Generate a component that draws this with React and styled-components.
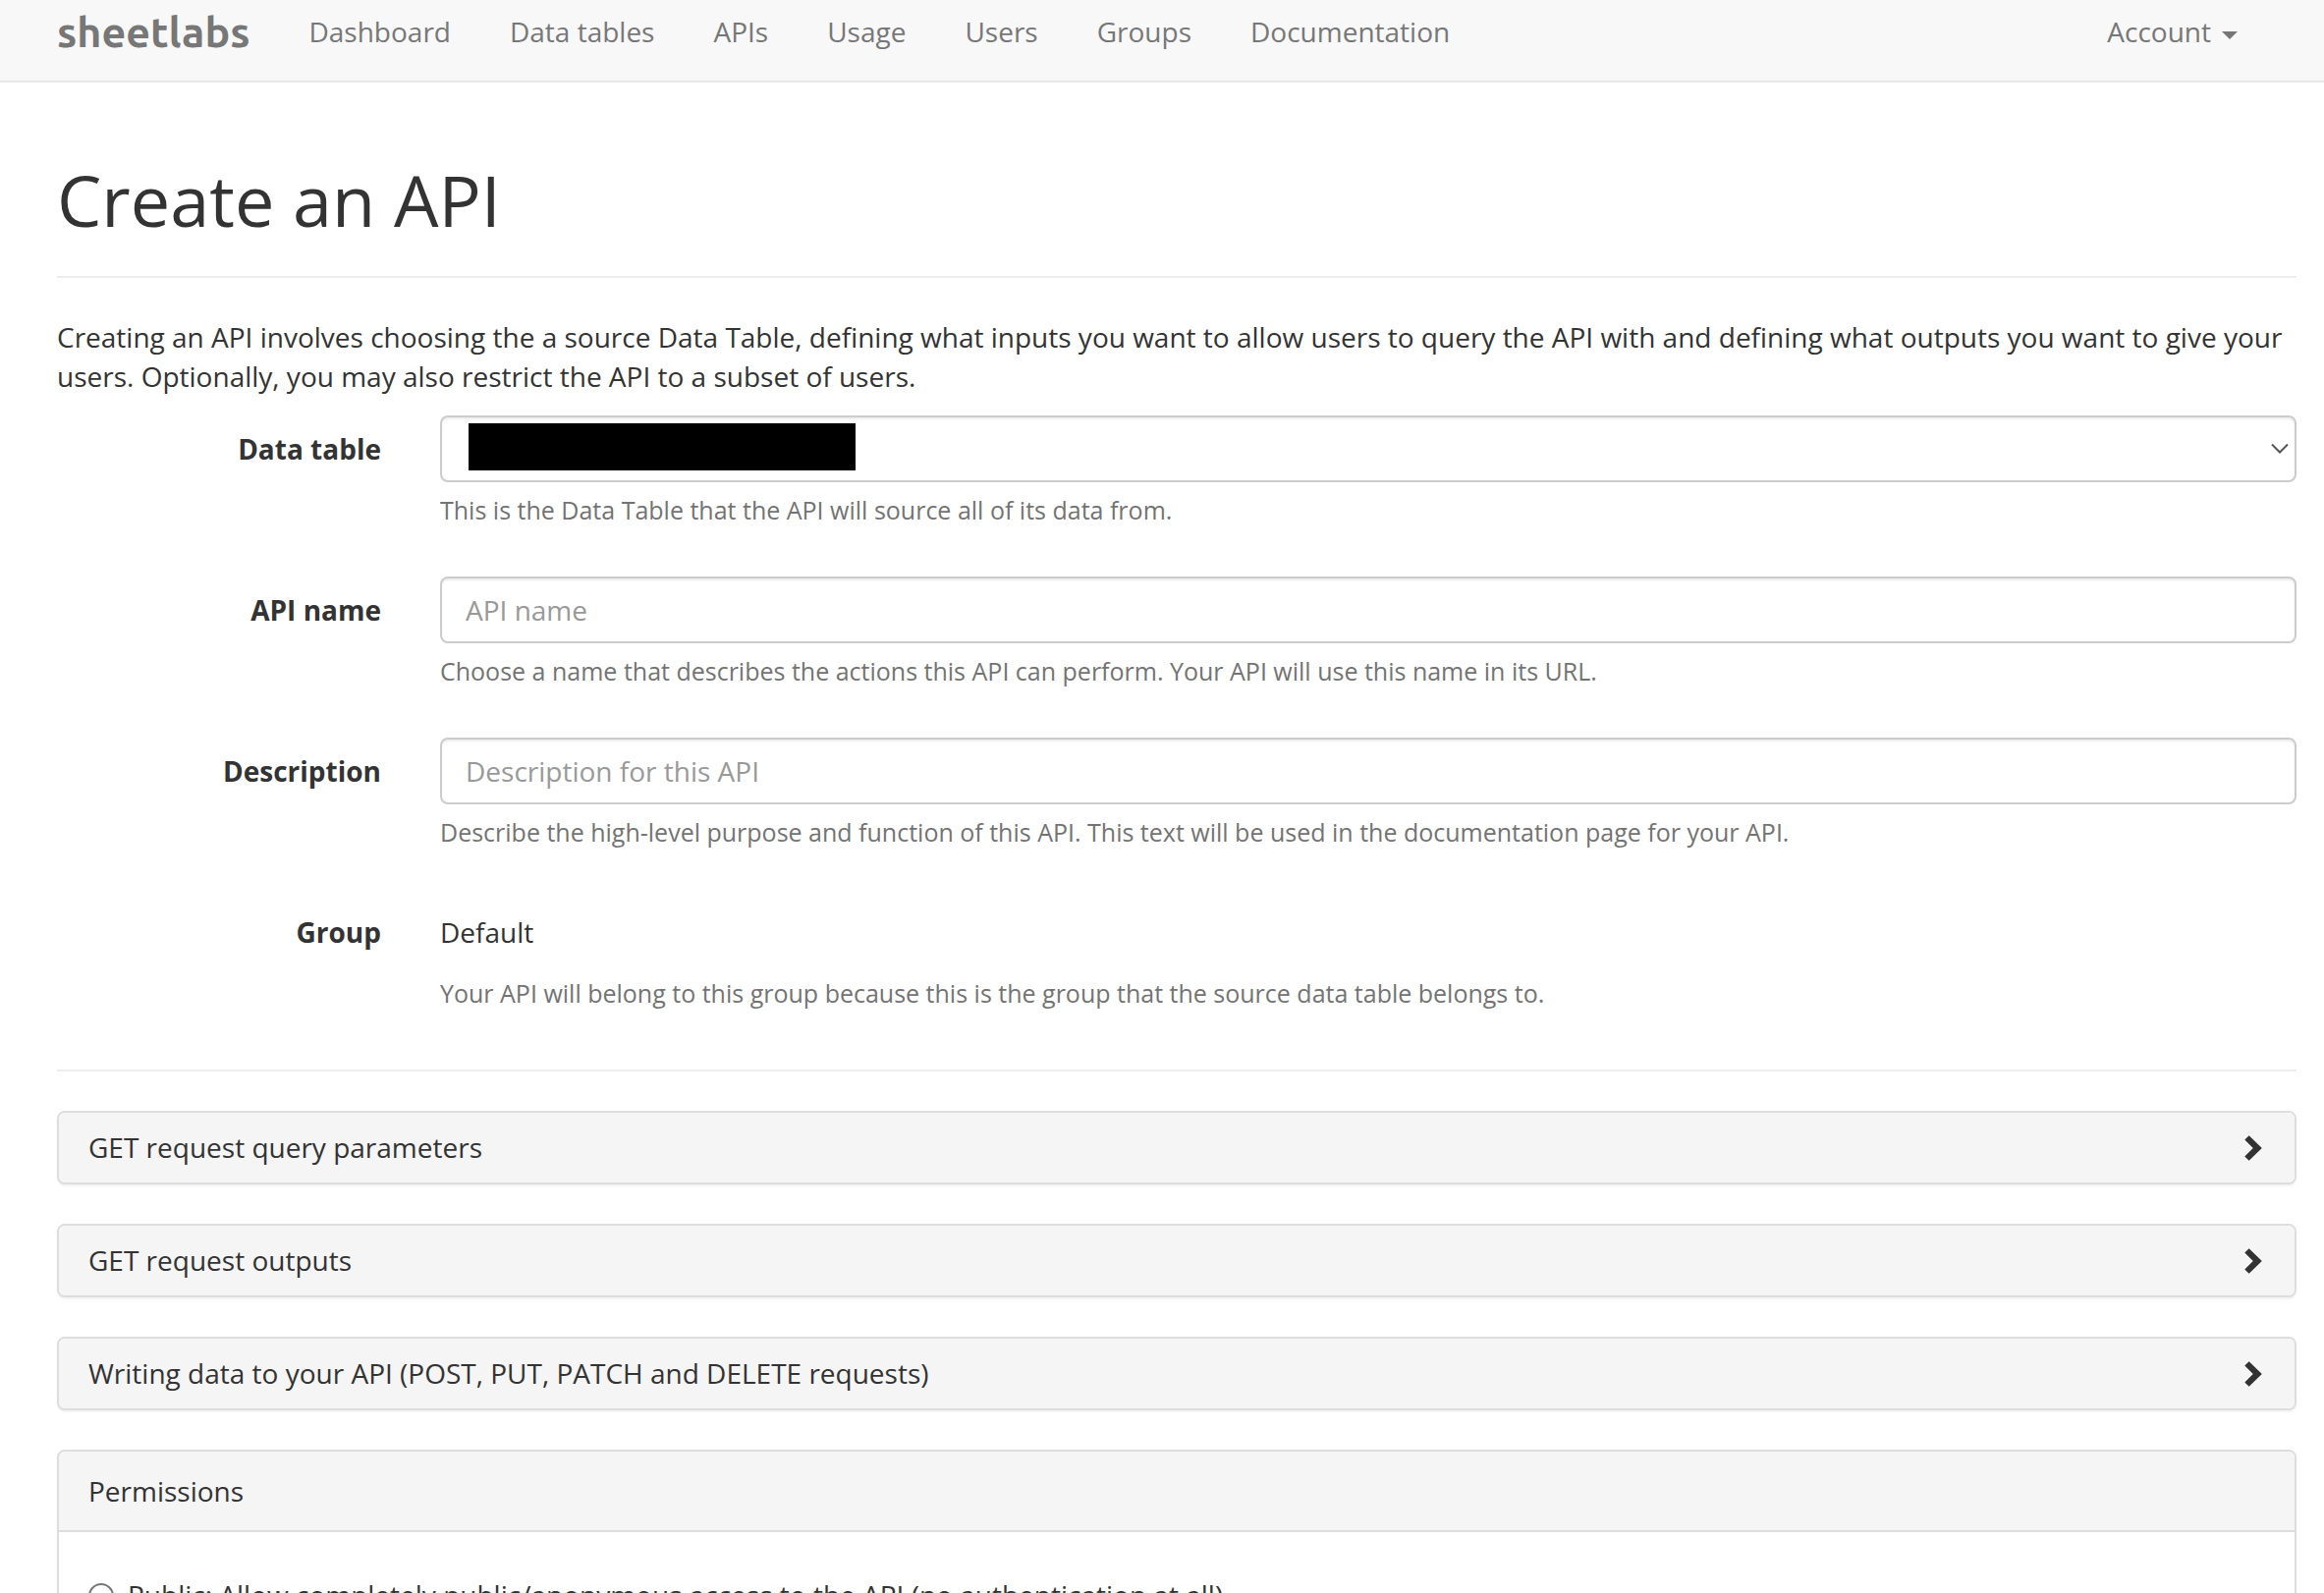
import React, { useState } from 'react';
import styled, { createGlobalStyle } from 'styled-components';

const GlobalStyle = createGlobalStyle`
  *,
  *::before,
  *::after {
    box-sizing: border-box;
  }

  body {
    margin: 0;
    background-color: #fff;
    color: #333;
    font-family: 'Open Sans', 'Noto Sans', sans-serif;
    font-size: 28px;
    line-height: 40px;
  }

  input,
  select,
  button {
    font-family: inherit;
    font-size: inherit;
    line-height: inherit;
  }
`;

const Navbar = styled.nav`
  display: flex;
  align-items: flex-start;
  gap: 60px;
  padding: 12px 88px 30px 58px;
  background-color: #f8f8f8;
  border-bottom: 2px solid #e7e7e7;
`;

const Brand = styled.a`
  color: #777;
  font-family: Ubuntu, Lato, sans-serif;
  font-size: 43px;
  font-weight: 700;
  line-height: 40px;
  text-decoration: none;
`;

const NavList = styled.ul`
  display: flex;
  flex: 1;
  gap: 60px;
  margin: 0;
  padding: 0;
  list-style: none;
`;

const NavLink = styled.a`
  color: #777;
  text-decoration: none;

  &:hover {
    color: #333;
  }
`;

const AccountButton = styled.button`
  display: flex;
  align-items: center;
  gap: 11px;
  padding: 0;
  border: 0;
  background: none;
  color: #777;
  cursor: pointer;

  &::after {
    content: '';
    margin-top: 8px;
    border-top: 8px solid;
    border-right: 8px solid transparent;
    border-left: 8px solid transparent;
  }
`;

const Page = styled.main`
  padding: 80px 28px 40px 58px;
`;

const PageTitle = styled.h1`
  margin: 0 0 40px;
  padding-bottom: 38px;
  border-bottom: 2px solid #eee;
  font-size: 72px;
  font-weight: 400;
  line-height: 79px;
`;

const Intro = styled.p`
  margin: 0 0 20px;
`;

const FormRow = styled.div`
  display: grid;
  grid-template-columns: 330px 1fr;
  column-gap: 60px;
  margin-bottom: 50px;
`;

const RowLabel = styled.label`
  padding-top: 14px;
  font-weight: 700;
  text-align: right;
`;

const fieldStyles = `
  display: block;
  width: 100%;
  height: 68px;
  padding: 12px 24px;
  border: 2px solid #ccc;
  border-radius: 8px;
  background-color: #fff;
  box-shadow: inset 0 2px 2px rgba(0, 0, 0, 0.075);
  color: #555;
`;

const TextInput = styled.input`
  ${fieldStyles}

  &::placeholder {
    color: #999;
    opacity: 1;
  }
`;

const Select = styled.select`
  ${fieldStyles}
  appearance: none;
`;

const SelectWrap = styled.div`
  position: relative;

  svg {
    position: absolute;
    top: 28px;
    right: 8px;
    pointer-events: none;
  }
`;

const Redaction = styled.span`
  position: absolute;
  top: 8px;
  left: 29px;
  width: 394px;
  height: 48px;
  background-color: #000;
  pointer-events: none;
`;

const StaticValue = styled.output`
  display: block;
  height: 68px;
  padding-top: 14px;
`;

const HelpText = styled.p`
  margin: 10px 0 0;
  color: #737373;
  font-size: 25px;
  line-height: 36px;
`;

const Divider = styled.hr`
  margin: 60px 0 40px;
  border: 0;
  border-top: 2px solid #eee;
`;

const Panels = styled.div`
  display: flex;
  flex-direction: column;
  gap: 40px;
`;

const Panel = styled.section`
  overflow: hidden;
  border: 2px solid #ddd;
  border-radius: 8px;
  background-color: #fff;
  box-shadow: 0 2px 2px rgba(0, 0, 0, 0.05);
`;

const PanelToggle = styled.button`
  display: flex;
  align-items: center;
  justify-content: space-between;
  width: 100%;
  padding: 20px 30px;
  border: 0;
  background-color: #f5f5f5;
  color: #333;
  line-height: 31px;
  text-align: left;
  cursor: pointer;
`;

const PanelHeading = styled.h2`
  margin: 0;
  padding: 20px 30px;
  border-bottom: 2px solid #ddd;
  background-color: #f5f5f5;
  font-size: 28px;
  font-weight: 400;
`;

const PanelBody = styled.div`
  padding: 44px 30px 30px;
`;

const RadioLabel = styled.label`
  display: flex;
  align-items: flex-start;
  gap: 14px;

  input {
    flex: none;
    width: 26px;
    height: 26px;
    margin: 8px 0 0;
    border: 2px solid #767676;
    border-radius: 50%;
    background-color: #fff;
    appearance: none;

    &:checked {
      border-width: 8px;
    }
  }
`;

const navItems = ['Dashboard', 'Data tables', 'APIs', 'Usage', 'Users', 'Groups', 'Documentation'];

const sections = [
  'GET request query parameters',
  'GET request outputs',
  'Writing data to your API (POST, PUT, PATCH and DELETE requests)',
];

const ArrowDown = () => (
  <svg width="18" height="12" viewBox="0 0 18 12" fill="none" aria-hidden="true">
    <path d="M1 1.5 9 9.5 17 1.5" stroke="#555" strokeWidth="2" />
  </svg>
);

const ChevronRight = () => (
  <svg width="28" height="28" viewBox="0 0 28 28" aria-hidden="true">
    <path d="M11.7 1.2 24.8 14 11.7 26.8 7.3 22.5 15.8 14 7.3 5.5Z" fill="#333" />
  </svg>
);

const Field = ({ id, label, help, children }) => (
  <FormRow>
    <RowLabel htmlFor={id}>{label}</RowLabel>
    <div>
      {children}
      <HelpText id={`${id}-help`}>{help}</HelpText>
    </div>
  </FormRow>
);

const App = () => {
  const [access, setAccess] = useState('');

  return (
    <>
      <GlobalStyle />
      <Navbar>
        <Brand href="#">sheetlabs</Brand>
        <NavList>
          {navItems.map((item) => (
            <li key={item}>
              <NavLink href="#">{item}</NavLink>
            </li>
          ))}
        </NavList>
        <AccountButton type="button">Account</AccountButton>
      </Navbar>

      <Page>
        <PageTitle>Create an API</PageTitle>
        <Intro>
          Creating an API involves choosing the a source Data Table, defining what inputs you want to allow users to
          query the API with and defining what outputs you want to give your users. Optionally, you may also restrict
          the API to a subset of users.
        </Intro>

        <form>
          <Field
            id="data-table"
            label="Data table"
            help="This is the Data Table that the API will source all of its data from."
          >
            <SelectWrap>
              <Select id="data-table" aria-describedby="data-table-help">
                <option value="" />
              </Select>
              <Redaction />
              <ArrowDown />
            </SelectWrap>
          </Field>
          <Field
            id="api-name"
            label="API name"
            help="Choose a name that describes the actions this API can perform. Your API will use this name in its URL."
          >
            <TextInput id="api-name" type="text" placeholder="API name" aria-describedby="api-name-help" />
          </Field>
          <Field
            id="description"
            label="Description"
            help="Describe the high-level purpose and function of this API. This text will be used in the documentation page for your API."
          >
            <TextInput
              id="description"
              type="text"
              placeholder="Description for this API"
              aria-describedby="description-help"
            />
          </Field>
          <Field
            id="group"
            label="Group"
            help="Your API will belong to this group because this is the group that the source data table belongs to."
          >
            <StaticValue id="group">Default</StaticValue>
          </Field>

          <Divider />

          <Panels>
            {sections.map((title) => (
              <Panel key={title}>
                <PanelToggle type="button" aria-expanded="false">
                  {title}
                  <ChevronRight />
                </PanelToggle>
              </Panel>
            ))}
            <Panel>
              <PanelHeading>Permissions</PanelHeading>
              <PanelBody>
                <RadioLabel>
                  <input
                    type="radio"
                    name="access"
                    value="public"
                    checked={access === 'public'}
                    onChange={(e) => setAccess(e.target.value)}
                  />
                  Public: Allow completely public/anonymous access to the API (no authentication at all)
                </RadioLabel>
              </PanelBody>
            </Panel>
          </Panels>
        </form>
      </Page>
    </>
  );
};

export default App;
